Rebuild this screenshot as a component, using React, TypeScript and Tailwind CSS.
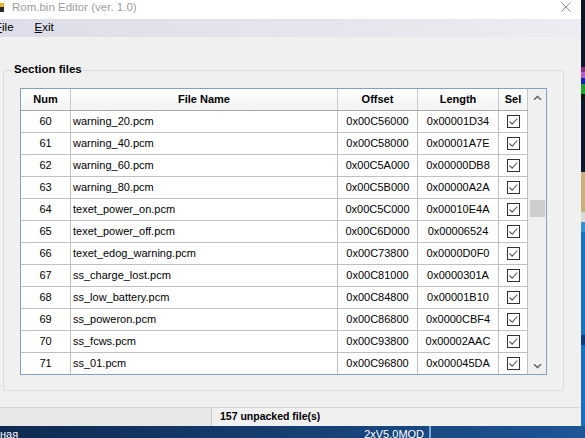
import React from "react";

const rows: [string, string, string, string][] = [
  ["60", "warning_20.pcm", "0x00C56000", "0x00001D34"],
  ["61", "warning_40.pcm", "0x00C58000", "0x00001A7E"],
  ["62", "warning_60.pcm", "0x00C5A000", "0x00000DB8"],
  ["63", "warning_80.pcm", "0x00C5B000", "0x00000A2A"],
  ["64", "texet_power_on.pcm", "0x00C5C000", "0x00010E4A"],
  ["65", "texet_power_off.pcm", "0x00C6D000", "0x00006524"],
  ["66", "texet_edog_warning.pcm", "0x00C73800", "0x0000D0F0"],
  ["67", "ss_charge_lost.pcm", "0x00C81000", "0x0000301A"],
  ["68", "ss_low_battery.pcm", "0x00C84800", "0x00001B10"],
  ["69", "ss_poweron.pcm", "0x00C86800", "0x0000CBF4"],
  ["70", "ss_fcws.pcm", "0x00C93800", "0x00002AAC"],
  ["71", "ss_01.pcm", "0x00C96800", "0x000045DA"],
];

function Check() {
  return (
    <svg width="13" height="13" viewBox="0 0 13 13">
      <rect x="0.5" y="0.5" width="12" height="12" fill="white" stroke="#333333" />
      <path d="M2.5 6.5 L5.2 9.2 L10.3 3.5" fill="none" stroke="#5a5a5a" strokeWidth="1.1" />
    </svg>
  );
}

function Chevron({ down }: { down?: boolean }) {
  return (
    <svg width="9" height="6" viewBox="0 0 9 6">
      <path
        d={down ? "M1 1.2 L4.5 4.6 L8 1.2" : "M1 4.8 L4.5 1.4 L8 4.8"}
        fill="none"
        stroke="#606060"
        strokeWidth="1.4"
      />
    </svg>
  );
}

export default function App() {
  const font = { fontFamily: '"Liberation Sans", Arial, sans-serif' };
  return (
    <div className="w-[585px] h-[438px] overflow-hidden flex flex-col bg-[#0b1626]" style={font}>
      <div className="flex h-[426px]">
        {/* window */}
        <div className="w-[581px] h-[426px] flex flex-col">
          {/* title bar */}
          <div className="h-[19px] bg-white flex items-start">
            <div className="mt-[3px] w-[4px] h-[9px] flex flex-col">
              <div className="h-[4px] bg-[#e8b820]" />
              <div className="h-[5px] bg-[#2a2a2a]" />
            </div>
            <div className="ml-[8px] text-[11.5px] leading-[15px] text-[#9d9d9d]">Rom.bin Editor (ver. 1.0)</div>
            <div className="ml-auto mr-[10px] mt-[2px]">
              <svg width="10" height="10" viewBox="0 0 10 10">
                <path d="M0.5 0.5 L9.5 9.5 M9.5 0.5 L0.5 9.5" stroke="#8a8a8a" strokeWidth="1" />
              </svg>
            </div>
          </div>
          {/* menu bar */}
          <div className="h-[18px] flex items-center text-[11.5px] text-black bg-linear-to-r from-[#dcdde8] to-[#ececf1]">
            <span className="ml-[-5px]">
              <span className="underline">F</span>ile
            </span>
            <span className="ml-[21px]">
              <span className="underline">E</span>xit
            </span>
          </div>
          {/* body */}
          <div className="h-[370px] bg-[#f0f0f0] pt-[33px] pl-[3px]">
            <div className="relative w-[561px] h-[321px] border border-[#dcdcdc] rounded-[2px] pt-[17px] pl-[16px]">
              <div className="absolute left-[9px] top-[-9px] px-[1px] bg-[#f0f0f0] font-bold text-[11.5px] leading-[14px] text-black">
                Section files
              </div>
              {/* table */}
              <div className="w-[527px] h-[287px] border border-[#82a0c0] bg-white flex overflow-hidden">
                <div className="w-[507px] flex flex-col overflow-hidden text-[11px] text-black">
                  <div className="grid grid-cols-[50px_267px_80px_81px_29px] h-[22px] shrink-0 border-b border-[#a8a8a8] bg-linear-to-b from-white to-[#f3f3f3] font-bold">
                    <div className="border-r border-[#c8c8c8] flex items-center justify-center">Num</div>
                    <div className="border-r border-[#c8c8c8] flex items-center justify-center">File Name</div>
                    <div className="border-r border-[#c8c8c8] flex items-center justify-center">Offset</div>
                    <div className="border-r border-[#c8c8c8] flex items-center justify-center">Length</div>
                    <div className="border-r border-[#c8c8c8] flex items-center justify-center">Sel</div>
                  </div>
                  {rows.map((r) => (
                    <div
                      key={r[0]}
                      className="grid grid-cols-[50px_267px_80px_81px_29px] h-[22px] shrink-0 border-b border-[#c0c0c0]"
                    >
                      <div className="border-r border-[#c0c0c0] flex items-center justify-center">{r[0]}</div>
                      <div className="border-r border-[#c0c0c0] flex items-center pl-[2px]">{r[1]}</div>
                      <div className="border-r border-[#c0c0c0] flex items-center justify-center">{r[2]}</div>
                      <div className="border-r border-[#c0c0c0] flex items-center justify-center">{r[3]}</div>
                      <div className="border-r border-[#c0c0c0] flex items-center justify-center pl-[1px]">
                        <Check />
                      </div>
                    </div>
                  ))}
                </div>
                {/* scrollbar */}
                <div className="w-[18px] bg-[#f0f0f0] flex flex-col">
                  <div className="h-[17px] flex items-center justify-center">
                    <Chevron />
                  </div>
                  <div className="flex-1 pt-[94px]">
                    <div className="ml-[2px] w-[15px] h-[17px] bg-[#cdcdcd]" />
                  </div>
                  <div className="h-[17px] flex items-center justify-center pt-[1px]">
                    <Chevron down />
                  </div>
                </div>
              </div>
            </div>
          </div>
          {/* status bar */}
          <div className="h-[19px] flex border-t border-[#d5d5d5] bg-[#f0f0f0]">
            <div className="w-[212px] bg-[#e8e8e8] border-r border-[#cbcbcb]" />
            <div className="pl-[8px] flex items-center font-bold text-[10.5px] text-black">157 unpacked file(s)</div>
          </div>
        </div>
        {/* desktop strip */}
        <div className="w-[4px] flex flex-col">
          <div className="h-[67px] bg-[#0b1626]" />
          <div className="h-[5px] bg-[#8a2a80]" />
          <div className="h-[6px] bg-[#b060c0]" />
          <div className="h-[6px] bg-[#1424b0]" />
          <div className="h-[10px] bg-[#22a028]" />
          <div className="h-[6px] bg-[#101010]" />
          <div className="h-[72px] bg-[#0b1a30]" />
          <div className="h-[40px] bg-[#c8b27a]" />
          <div className="h-[10px] bg-[#d8dcd8]" />
          <div className="h-[10px] bg-[#3a8fd0]" />
          <div className="h-[103px] bg-[#1d6fc0]" />
          <div className="h-[10px] bg-[#0d3d7a]" />
          <div className="flex-1 bg-[#1a6ec0]" />
        </div>
      </div>
      {/* taskbar */}
      <div className="h-[12px] flex items-start overflow-hidden bg-linear-to-r from-[#0e2a50] via-[#163f72] to-[#1d5596] text-white text-[11px] leading-[13px]">
        <span className="pt-[2px]">ная</span>
        <span className="ml-[346px] pt-[2px]">2xV5.0MOD</span>
        <div className="ml-[5px] w-[2px] h-[12px] bg-[#7ea6d6]" />
      </div>
    </div>
  );
}
